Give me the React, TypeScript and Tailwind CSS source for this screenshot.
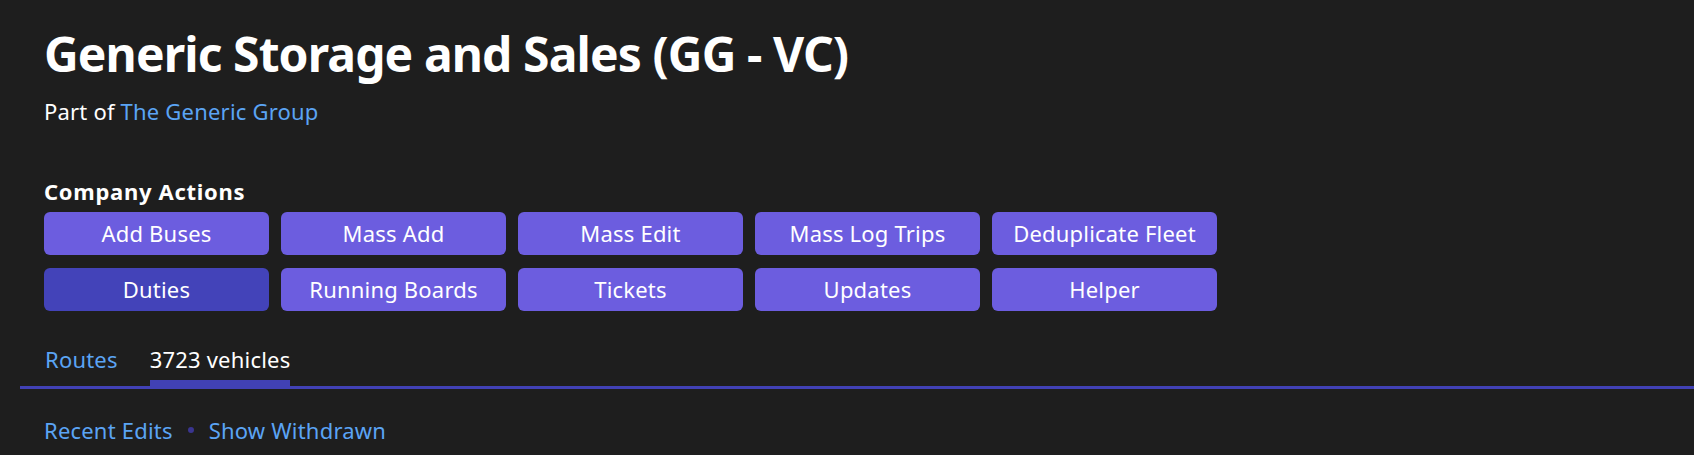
const actions = [
  'Add Buses',
  'Mass Add',
  'Mass Edit',
  'Mass Log Trips',
  'Deduplicate Fleet',
  'Duties',
  'Running Boards',
  'Tickets',
  'Updates',
  'Helper',
];

const font = { fontFamily: '"Segoe UI", "Noto Sans", "Open Sans", sans-serif' };

export default function App() {
  return (
    <div className="min-h-[455px] w-full bg-[#1e1e1e] text-white overflow-hidden tracking-[0.2px]" style={font}>
      <div className="pl-[44px] pt-[24px]">
        <h1 className="text-[48px] leading-[60px] font-bold tracking-[-0.9px] text-white">
          Generic Storage and Sales (GG - VC)
        </h1>
        <p className="mt-[12px] text-[22px] leading-[30px] text-white">
          Part of <a className="text-[#5ba4f4]">The Generic Group</a>
        </p>

        <h2 className="mt-[50px] text-[22px] leading-[30px] font-bold tracking-[0.7px]">Company Actions</h2>
        <div className="mt-[6px] grid grid-cols-[repeat(5,225px)] gap-x-[12px] gap-y-[13px]">
          {actions.map((a) => (
            <button
              key={a}
              className={`h-[43px] rounded-md flex items-center justify-center text-[22px] text-white ${
                a === 'Duties' ? 'bg-[#4343b9]' : 'bg-[#6c5ddf]'
              }`}
            >
              {a}
            </button>
          ))}
        </div>
      </div>

      {/* tabs */}
      <div className="mt-[33px] ml-[20px] pl-[25px] flex gap-[32px] border-b-[3px] border-[#4141b5]">
        <div className="pb-[6px] border-b-[6px] border-transparent text-[22px] leading-[30px] text-[#5ba4f4]">
          Routes
        </div>
        <div className="pb-[6px] border-b-[6px] border-[#4141b5] text-[22px] leading-[30px] text-white">
          3723 vehicles
        </div>
      </div>

      <div className="pl-[44px] mt-[26px] flex items-center gap-[15px] text-[22px] leading-[30px] text-[#5ba4f4]">
        <a>Recent Edits</a>
        <span className="w-[6px] h-[6px] rounded-full bg-[#3a3590]" />
        <a>Show Withdrawn</a>
      </div>
    </div>
  );
}
